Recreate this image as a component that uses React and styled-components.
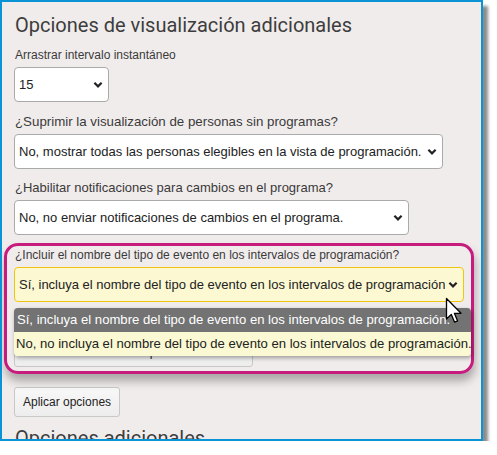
import React from 'react'
import styled, { createGlobalStyle } from 'styled-components'

const GlobalStyle = createGlobalStyle`
  html, body {
    margin: 0;
    padding: 0;
    background: #ffffff;
  }
`

const Frame = styled.div`
  position: relative;
  width: 479px;
  height: 437px;
  border: 2px solid #0a94d6;
  background: #f1ecec;
  box-shadow: 5px 6px 3px rgba(0, 0, 0, 0.45);
  overflow: hidden;
`

const Content = styled.div`
  display: flex;
  flex-direction: column;
  align-items: flex-start;
  padding-left: 12px;
`

const Title = styled.h2`
  margin: ${(p) => p.top || '11px'} 0 0 1px;
  font-family: Roboto, 'Liberation Sans', sans-serif;
  font-weight: 400;
  font-size: 20px;
  line-height: 24px;
  color: #3d3d3d;
`

const Field = styled.div`
  display: flex;
  flex-direction: column;
  align-items: flex-start;
  gap: 4px;
  margin-top: ${(p) => p.top || '12px'};
`

const Label = styled.label`
  margin-left: 1px;
  font-family: 'Liberation Sans', Arial, sans-serif;
  font-size: ${(p) => p.size || 12}px;
  line-height: 16px;
  color: #3a3a3a;
`

const SelectBox = styled.div`
  box-sizing: border-box;
  display: flex;
  align-items: center;
  justify-content: space-between;
  gap: 3px;
  width: ${(p) => p.width}px;
  height: 35px;
  padding: 0 5px 0 4px;
  border: 1px solid ${(p) => (p.active ? '#f1c40f' : '#aaaaaa')};
  border-radius: 4px;
  background: ${(p) => (p.active ? '#fbf8d2' : '#ffffff')};
  font-family: 'Liberation Sans', Arial, sans-serif;
  font-size: 13px;
  color: #222222;
  white-space: nowrap;
  overflow: hidden;
`

const SelectText = styled.span`
  overflow: hidden;
  flex: 1;
`

const Chevron = () => (
  <svg width="10" height="8" viewBox="0 0 10 8" style={{ flex: 'none' }}>
    <path d="M1.4 1.8 L5 5.4 L8.6 1.8" fill="none" stroke="#222" strokeWidth="2.2" />
  </svg>
)

const Select = ({ width, active, children }) => (
  <SelectBox width={width} active={active}>
    <SelectText>{children}</SelectText>
    <Chevron />
  </SelectBox>
)

const Highlight = styled.div`
  position: relative;
  box-sizing: border-box;
  width: 470px;
  height: 131px;
  margin: 8px 0 0 -10px;
  padding: 1px 0 0 7px;
  border: 3px solid #c51c7e;
  border-radius: 14px;
  box-shadow: 1px 7px 10px rgba(0, 0, 0, 0.3);
`

const Button = styled.button`
  box-sizing: border-box;
  width: ${(p) => p.width || 'auto'};
  height: 30px;
  margin-top: ${(p) => p.top || '0'};
  padding: 0 8px;
  border: 1px solid #c8c8c8;
  border-radius: 3px;
  background: linear-gradient(#f8f8f8, #ededed);
  font-family: 'Liberation Sans', Arial, sans-serif;
  font-size: 12px;
  color: #222222;
  white-space: nowrap;
`

const Menu = styled.ul`
  position: absolute;
  left: 7px;
  top: 62px;
  width: 457px;
  margin: 0;
  padding: 0;
  list-style: none;
  border-radius: 4px;
  overflow: hidden;
  box-shadow: 1px 2px 4px rgba(0, 0, 0, 0.35);
  font-family: 'Liberation Sans', Arial, sans-serif;
  font-size: 13.1px;
`

const Option = styled.li`
  height: 24px;
  line-height: 24px;
  padding-left: ${(p) => (p.selected ? '3px' : '2px')};
  white-space: nowrap;
  background: ${(p) => (p.selected ? '#737373' : '#fbf9d3')};
  color: ${(p) => (p.selected ? '#ffffff' : '#222222')};
`

const Cursor = styled.svg`
  position: absolute;
  left: 443px;
  top: 295px;
`

export default function App() {
  return (
    <>
      <GlobalStyle />
      <Frame>
        <Content>
          <Title>Opciones de visualización adicionales</Title>

          <Field top="10px">
            <Label>Arrastrar intervalo instantáneo</Label>
            <Select width={95}>15</Select>
          </Field>

          <Field>
            <Label size={13.3}>¿Suprimir la visualización de personas sin programas?</Label>
            <Select width={429}>
              No, mostrar todas las personas elegibles en la vista de programación.
            </Select>
          </Field>

          <Field top="11px">
            <Label size={13}>¿Habilitar notificaciones para cambios en el programa?</Label>
            <Select width={395}>No, no enviar notificaciones de cambios en el programa.</Select>
          </Field>

          <Highlight>
            <Field top="0">
              <Label>¿Incluir el nombre del tipo de evento en los intervalos de programación?</Label>
              <Select width={450} active>
                Sí, incluya el nombre del tipo de evento en los intervalos de programación.
              </Select>
            </Field>
            <Button width="239px" top="35px">Restablecer opciones</Button>
            <Menu>
              <Option selected>
                Sí, incluya el nombre del tipo de evento en los intervalos de programación.
              </Option>
              <Option>
                No, no incluya el nombre del tipo de evento en los intervalos de programación.
              </Option>
            </Menu>
          </Highlight>

          <Button top="13px">Aplicar opciones</Button>

          <Title top="9px">Opciones adicionales</Title>
        </Content>

        <Cursor width="20" height="30" viewBox="0 0 20 30">
          <path
            d="M1.5 1.5 L1.5 22 L6.3 17.4 L9.6 25.2 L12.6 23.9 L9.4 16.3 L16 16.3 Z"
            fill="#ffffff"
            stroke="#000000"
            strokeWidth="1.3"
            strokeLinejoin="round"
          />
        </Cursor>
      </Frame>
    </>
  )
}
